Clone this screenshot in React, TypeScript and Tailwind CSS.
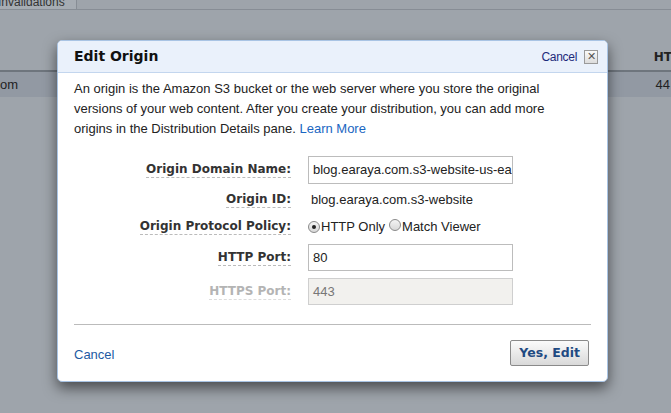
import React from 'react';

const labelCls =
  "font-['DejaVu_Sans',sans-serif] text-[12px] font-bold text-[#333] border-b border-dashed border-[#bbb] leading-[15px]";

function Radio({ checked }: { checked?: boolean }) {
  return (
    <span className="inline-flex w-[12px] h-[12px] rounded-full border border-[#8a8a8a] bg-gradient-to-b from-[#f4f4f4] to-[#d8d8d8] items-center justify-center shrink-0">
      {checked && <span className="w-[4px] h-[4px] rounded-full bg-[#222]" />}
    </span>
  );
}

function Row({ label, disabled, className, children }: { label: string; disabled?: boolean; className?: string; children: React.ReactNode }) {
  return (
    <div className={`flex items-center ${className ?? ''}`}>
      <div className="w-[217px] flex justify-end">
        <span className={`${labelCls} ${disabled ? 'text-[#b4b4b4] border-[#ddd]' : ''}`}>{label}</span>
      </div>
      <div className="ml-[17px] w-[205px] flex items-center">{children}</div>
    </div>
  );
}

export default function App() {
  return (
    <div className="relative w-[671px] h-[413px] overflow-hidden bg-[#9ea4ab] font-['Liberation_Sans',Arial,sans-serif] text-[13px]">
      {/* page behind the overlay */}
      <div className="flex flex-col">
        <div className="flex h-[10px] border-b border-[#878d95]">
          <div className="w-[77px] bg-[#a6acb3] border-r border-[#878d95] relative overflow-hidden">
            <span className="absolute left-[-2px] top-[-7px] text-[12px] text-[#333]">Invalidations</span>
          </div>
        </div>
        <div className="h-[60px] flex items-end justify-end pb-[4px]">
          <span className="font-['DejaVu_Sans',sans-serif] font-bold text-[12px] text-[#222] mr-[-1px]">HT</span>
        </div>
        <div className="h-[27px] bg-[#9299a3] border-t-2 border-[#6e757d] flex items-center justify-between text-[#222]">
          <span>om</span>
          <span className="mr-[1px]">44</span>
        </div>
      </div>

      {/* dialog overlay */}
      <div className="absolute left-[57px] top-[40px] w-[551px] h-[342px] bg-white rounded-[5px] border border-[#a9c4e4] shadow-[0_6px_14px_rgba(0,0,0,0.55)] flex flex-col overflow-hidden">
        <div className="h-[32px] shrink-0 bg-[#eaf1fb] border-b border-[#c3d6ee] flex items-center justify-between pl-[16px] pr-[9px]">
          <span className="font-['DejaVu_Sans',sans-serif] font-bold text-[14px] text-[#111]">Edit Origin</span>
          <div className="flex items-center gap-[7px]">
            <span className="text-[12px] text-[#1d2a7a] tracking-[-0.3px]">Cancel</span>
            <span className="w-[14px] h-[14px] border border-[#9a9a9a] bg-gradient-to-b from-[#fafafa] to-[#dcdcdc] flex items-center justify-center text-[11px] leading-none text-[#555]">✕</span>
          </div>
        </div>

        <div className="px-[16px] flex flex-col">
          <p className="mt-[6px] leading-[20px] text-[#222]">
            An origin is the Amazon S3 bucket or the web server where you store the original<br />
            versions of your web content. After you create your distribution, you can add more<br />
            origins in the Distribution Details pane. <span className="text-[#1a66c2]">Learn More</span>
          </p>

          <div className="mt-[17px] flex flex-col">
            <Row label="Origin Domain Name:" className="h-[28px]">
              <div className="w-full h-[28px] border border-[#bcbcbc] px-[4px] flex items-center overflow-hidden whitespace-nowrap text-[#222]">
                blog.earaya.com.s3-website-us-ea
              </div>
            </Row>
            <Row label="Origin ID:" className="h-[32px]">
              <span className="pl-[3px] text-[#222]">blog.earaya.com.s3-website</span>
            </Row>
            <Row label="Origin Protocol Policy:" className="h-[22px]">
              <div className="flex items-center text-[#222]">
                <Radio checked />
                <span className="ml-[1px]">HTTP Only</span>
                <span className="ml-[4px]"><Radio /></span>
                <span className="ml-[1px]">Match Viewer</span>
              </div>
            </Row>
            <Row label="HTTP Port:" className="h-[27px] mt-[6px]">
              <div className="w-full h-[27px] border border-[#bcbcbc] px-[4px] flex items-center text-[#222]">80</div>
            </Row>
            <Row label="HTTPS Port:" disabled className="h-[27px] mt-[7px]">
              <div className="w-full h-[27px] border border-[#cfcfcf] bg-[#f2f1ee] px-[4px] flex items-center text-[#777]">443</div>
            </Row>
          </div>

          <div className="mt-[19px] border-t border-[#bbb]" />

          <div className="mt-[15px] flex items-center justify-between">
            <span className="text-[#1d5aa3] mt-[3px]">Cancel</span>
            <span className="mr-[2px] h-[26px] px-[8px] border border-[#8a8a8a] rounded-[2px] bg-gradient-to-b from-[#fbfbfb] to-[#d9d9d9] flex items-center font-['DejaVu_Sans',sans-serif] font-bold text-[12.5px] text-[#1f4a82]">
              Yes, Edit
            </span>
          </div>
        </div>
      </div>
    </div>
  );
}
